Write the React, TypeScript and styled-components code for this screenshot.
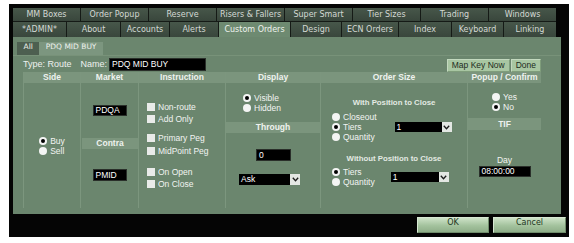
import React from "react";
import styled, { createGlobalStyle, css } from "styled-components";

const GlobalStyle = createGlobalStyle`
  html, body {
    margin: 0;
    padding: 0;
    background: #ffffff;
  }
  body {
    font-family: "Liberation Sans", Arial, sans-serif;
  }
`;

const Frame = styled.div`
  box-sizing: border-box;
  width: 560px;
  height: 233px;
  margin: 4px 0 0 9px;
  padding: 4px 3px 0 4px;
  background: #050505;
  display: flex;
  flex-direction: column;
`;

const TabRow = styled.div<{ $h: number; $top?: boolean }>`
  display: flex;
  width: 543px;
  height: ${(p) => p.$h}px;
  box-sizing: border-box;
  ${(p) => p.$top && css`border-bottom: 1px solid #151a16;`}
`;

const Tab = styled.div<{ $w?: number; $active?: boolean }>`
  box-sizing: border-box;
  flex: ${(p) => (p.$w ? `0 0 ${p.$w}px` : "1 1 0")};
  display: flex;
  align-items: center;
  justify-content: center;
  border-right: 1px solid #151a16;
  background: ${(p) => (p.$active ? "#6e8a71" : "linear-gradient(#47574a, #39463c)")};
  color: ${(p) => (p.$active ? "#eef3ee" : "#d4d9d4")};
  font: 8px "DejaVu Sans", Verdana, sans-serif;
  white-space: nowrap;

  &:last-child {
    border-right: none;
  }
`;

const Panel = styled.div`
  box-sizing: border-box;
  width: 548px;
  height: 177px;
  background: #6b866e;
  display: flex;
  flex-direction: column;
`;

const SubTabs = styled.div`
  display: flex;
  height: 13px;
  padding: 5px 0 0 4px;
  border-bottom: 1px solid #789279;
`;

const SubTab = styled.div<{ $dark?: boolean }>`
  padding: 0 6.5px;
  line-height: 13px;
  background: ${(p) => (p.$dark ? "#4d5f50" : "#7c967f")};
  color: #eef2ee;
  font: 7.5px "DejaVu Sans", Verdana, sans-serif;
  white-space: nowrap;
`;

const Content = styled.div`
  display: flex;
  flex-direction: column;
  padding: 0 20px 0 10px;
`;

const TopRow = styled.div`
  display: flex;
  align-items: center;
  height: 16px;
  color: #eef1ee;
  font-size: 9px;
`;

const TopLabel = styled.span<{ $gap: number }>`
  margin-right: ${(p) => p.$gap}px;
  white-space: nowrap;
`;

const Actions = styled.div`
  display: flex;
  gap: 1px;
  margin-left: auto;
  align-self: flex-end;
`;

const SmallButton = styled.div`
  box-sizing: border-box;
  height: 13px;
  padding: 0 4px;
  line-height: 11px;
  background: #a8c6a2;
  border: 1px solid #c3d9bf;
  border-right-color: #7f9d7b;
  border-bottom-color: #7f9d7b;
  color: #1d2c1d;
  font-size: 8.5px;
  white-space: nowrap;
`;

const Field = styled.div<{ $w: number; $h: number }>`
  box-sizing: border-box;
  width: ${(p) => p.$w}px;
  height: ${(p) => p.$h}px;
  padding-left: 2px;
  background: #000;
  border: 1px solid #2a2f2a;
  color: #ffffff;
  font-size: 8.5px;
  line-height: ${(p) => p.$h - 2}px;
  white-space: nowrap;
  flex: none;
`;

const Dropdown = styled.div<{ $w: number; $h: number }>`
  box-sizing: border-box;
  display: flex;
  width: ${(p) => p.$w}px;
  height: ${(p) => p.$h}px;
  background: #000;
  color: #fff;
  font-size: 8.5px;
  flex: none;
`;

const DropText = styled.span<{ $h: number }>`
  flex: 1;
  padding-left: 2px;
  line-height: ${(p) => p.$h}px;
`;

const DropArrow = styled.span`
  width: 10px;
  background: #e3e7e3;
  display: flex;
  align-items: center;
  justify-content: center;
`;

const Grid = styled.div`
  display: flex;
  height: 136px;
`;

const Column = styled.div<{ $w: number }>`
  box-sizing: border-box;
  width: ${(p) => p.$w}px;
  border-left: 1px solid #7c967e;
  display: flex;
  flex-direction: column;
`;

const Header = styled.div`
  height: 11px;
  line-height: 11px;
  background: #7b957d;
  color: #eef2ee;
  font-size: 8.5px;
  font-weight: bold;
  text-align: center;
  white-space: nowrap;
`;

const Band = styled.div<{ $h?: number }>`
  height: ${(p) => p.$h ?? 11}px;
  line-height: ${(p) => p.$h ?? 11}px;
  background: #7b957d;
  color: #eef2ee;
  font-size: 8.5px;
  font-weight: bold;
  text-align: center;
  align-self: stretch;
`;

const CellBody = styled.div<{ $center?: boolean }>`
  flex: 1;
  display: flex;
  flex-direction: column;
  ${(p) =>
    p.$center &&
    css`
      align-items: center;
      justify-content: center;
    `}
`;

const Stack = styled.div<{ $top?: number; $left?: number; $self?: string }>`
  display: flex;
  flex-direction: column;
  margin-top: ${(p) => p.$top ?? 0}px;
  margin-left: ${(p) => p.$left ?? 0}px;
  align-self: ${(p) => p.$self ?? "auto"};
`;

const Option = styled.label<{ $h?: number }>`
  display: flex;
  align-items: center;
  gap: 3px;
  height: ${(p) => p.$h ?? 10}px;
  color: #f2f4f2;
  font-size: 8.5px;
  white-space: nowrap;
`;

const Radio = styled.span<{ $on?: boolean }>`
  position: relative;
  flex: none;
  width: 8px;
  height: 8px;
  border-radius: 50%;
  background: #f4f5f4;
  ${(p) =>
    p.$on &&
    css`
      &::after {
        content: "";
        position: absolute;
        left: 2px;
        top: 2px;
        width: 4px;
        height: 4px;
        border-radius: 50%;
        background: #000;
      }
    `}
`;

const Check = styled.span`
  flex: none;
  width: 8px;
  height: 8px;
  background: #e9ebe9;
`;

const SubHeading = styled.div<{ $top: number }>`
  margin-top: ${(p) => p.$top}px;
  height: 10px;
  line-height: 10px;
  color: #e3eae3;
  font-size: 7.8px;
  font-weight: bold;
  text-align: center;
  white-space: nowrap;
`;

const ChoiceRow = styled.div<{ $top: number }>`
  display: flex;
  align-items: center;
  margin-top: ${(p) => p.$top}px;
  padding-left: 11px;
`;

const Note = styled.div<{ $top: number }>`
  margin-top: ${(p) => p.$top}px;
  height: 10px;
  line-height: 10px;
  color: #f2f4f2;
  font-size: 8.5px;
  text-align: center;
`;

const FieldSlot = styled.div<{ $top: number; $left?: number }>`
  margin-top: ${(p) => p.$top}px;
  margin-left: ${(p) => p.$left ?? 0}px;
  display: flex;
  ${(p) => p.$left === undefined && css`justify-content: center;`}
`;

const Footer = styled.div`
  flex: 1;
  display: flex;
  justify-content: flex-end;
  align-items: flex-start;
  gap: 4px;
  padding-top: 3px;
`;

const FooterButton = styled.div<{ $w: number }>`
  box-sizing: border-box;
  width: ${(p) => p.$w}px;
  height: 16px;
  line-height: 14px;
  text-align: center;
  background: linear-gradient(#cde2c7, #a3c29d 55%, #8fae89);
  border: 1px solid #d7e8d3;
  border-right-color: #6f8c6b;
  border-bottom-color: #6f8c6b;
  color: #223722;
  font: 8px "DejaVu Sans", Verdana, sans-serif;
`;

const Chevron = () => (
  <svg width="7" height="5" viewBox="0 0 7 5">
    <polyline points="0.8,0.8 3.5,3.8 6.2,0.8" fill="none" stroke="#1b1b1b" strokeWidth="1.3" />
  </svg>
);

const Select = ({ w, h, value }: { w: number; h: number; value: string }) => (
  <Dropdown $w={w} $h={h}>
    <DropText $h={h}>{value}</DropText>
    <DropArrow>
      <Chevron />
    </DropArrow>
  </Dropdown>
);

const topTabs = ["MM Boxes", "Order Popup", "Reserve", "Risers & Fallers", "Super Smart", "Tier Sizes", "Trading", "Windows"];

const lowerTabs: [string, number][] = [
  ["*ADMIN*", 54],
  ["About", 54],
  ["Accounts", 49],
  ["Alerts", 49],
  ["Custom Orders", 72],
  ["Design", 51],
  ["ECN Orders", 57],
  ["Index", 53],
  ["Keyboard", 52],
  ["Linking", 52],
];

const App: React.FC = () => {
  return (
    <>
      <GlobalStyle />
      <Frame>
        <TabRow $h={14} $top>
          {topTabs.map((t) => (
            <Tab key={t}>{t}</Tab>
          ))}
        </TabRow>
        <TabRow $h={15}>
          {lowerTabs.map(([t, w]) => (
            <Tab key={t} $w={w} $active={t === "Custom Orders"}>
              {t}
            </Tab>
          ))}
        </TabRow>

        <Panel>
          <SubTabs>
            <SubTab $dark>All</SubTab>
            <SubTab>PDQ MID BUY</SubTab>
          </SubTabs>

          <Content>
            <TopRow>
              <TopLabel $gap={9}>Type: Route</TopLabel>
              <TopLabel $gap={2}>Name:</TopLabel>
              <Field $w={97} $h={13}>PDQ MID BUY</Field>
              <Actions>
                <SmallButton>Map Key Now</SmallButton>
                <SmallButton>Done</SmallButton>
              </Actions>
            </TopRow>

            <Grid>
              <Column $w={57}>
                <Header>Side</Header>
                <CellBody $center>
                  <Stack>
                    <Option>
                      <Radio $on />
                      Buy
                    </Option>
                    <Option>
                      <Radio />
                      Sell
                    </Option>
                  </Stack>
                </CellBody>
              </Column>

              <Column $w={58}>
                <Header>Market</Header>
                <CellBody>
                  <FieldSlot $top={22}>
                    <Field $w={34} $h={11}>PDQA</Field>
                  </FieldSlot>
                  <Stack $top={22} $left={1}>
                    <Band>Contra</Band>
                  </Stack>
                  <FieldSlot $top={20}>
                    <Field $w={34} $h={12}>PMID</Field>
                  </FieldSlot>
                </CellBody>
              </Column>

              <Column $w={87}>
                <Header>Instruction</Header>
                <CellBody>
                  <Stack $top={18} $left={8}>
                    <Option $h={12}>
                      <Check />
                      Non-route
                    </Option>
                    <Option $h={12}>
                      <Check />
                      Add Only
                    </Option>
                  </Stack>
                  <Stack $top={7} $left={8}>
                    <Option $h={12}>
                      <Check />
                      Primary Peg
                    </Option>
                    <Option $h={13}>
                      <Check />
                      MidPoint Peg
                    </Option>
                  </Stack>
                  <Stack $top={9} $left={8}>
                    <Option $h={12}>
                      <Check />
                      On Open
                    </Option>
                    <Option $h={12}>
                      <Check />
                      On Close
                    </Option>
                  </Stack>
                </CellBody>
              </Column>

              <Column $w={95}>
                <Header>Display</Header>
                <CellBody>
                  <Stack $top={10} $left={17}>
                    <Option>
                      <Radio $on />
                      Visible
                    </Option>
                    <Option>
                      <Radio />
                      Hidden
                    </Option>
                  </Stack>
                  <Stack $top={9}>
                    <Band>Through</Band>
                  </Stack>
                  <FieldSlot $top={16} $left={30}>
                    <Field $w={35} $h={12}>0</Field>
                  </FieldSlot>
                  <FieldSlot $top={13} $left={13}>
                    <Select w={61} h={11} value="Ask" />
                  </FieldSlot>
                </CellBody>
              </Column>

              <Column $w={147}>
                <Header>Order Size</Header>
                <CellBody>
                  <SubHeading $top={15}>With Position to Close</SubHeading>
                  <ChoiceRow $top={4}>
                    <Stack $self="flex-start">
                      <Option>
                        <Radio />
                        Closeout
                      </Option>
                      <Option>
                        <Radio $on />
                        Tiers
                      </Option>
                      <Option>
                        <Radio />
                        Quantity
                      </Option>
                    </Stack>
                    <FieldSlot $top={0} $left={18}>
                      <Select w={57} h={10} value="1" />
                    </FieldSlot>
                  </ChoiceRow>
                  <SubHeading $top={12}>Without Position to Close</SubHeading>
                  <ChoiceRow $top={3}>
                    <Stack>
                      <Option>
                        <Radio $on />
                        Tiers
                      </Option>
                      <Option>
                        <Radio />
                        Quantity
                      </Option>
                    </Stack>
                    <FieldSlot $top={0} $left={16}>
                      <Select w={58} h={10} value="1" />
                    </FieldSlot>
                  </ChoiceRow>
                </CellBody>
              </Column>

              <Column $w={74}>
                <Header>Popup / Confirm</Header>
                <CellBody>
                  <Stack $top={9} $self="center">
                    <Option>
                      <Radio />
                      Yes
                    </Option>
                    <Option>
                      <Radio $on />
                      No
                    </Option>
                  </Stack>
                  <Stack $top={6}>
                    <Band $h={12}>TIF</Band>
                  </Stack>
                  <Note $top={25}>Day</Note>
                  <FieldSlot $top={1}>
                    <Field $w={52} $h={11}>08:00:00</Field>
                  </FieldSlot>
                </CellBody>
              </Column>
            </Grid>
          </Content>
        </Panel>

        <Footer>
          <FooterButton $w={72}>OK</FooterButton>
          <FooterButton $w={73}>Cancel</FooterButton>
        </Footer>
      </Frame>
    </>
  );
};

export default App;
